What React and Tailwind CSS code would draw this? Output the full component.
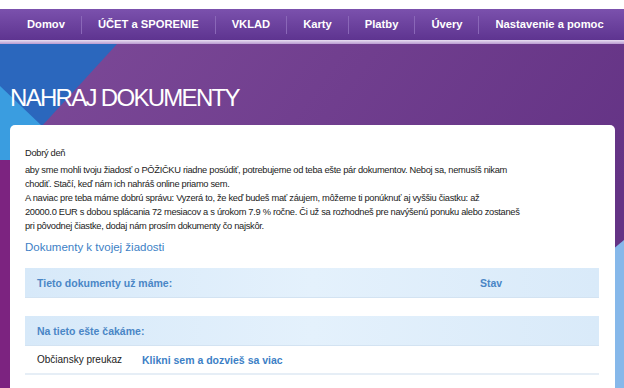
import React from 'react';

const navItems = ['Domov', 'ÚČET a SPORENIE', 'VKLAD', 'Karty', 'Platby', 'Úvery', 'Nastavenie a pomoc'];

const Background = () => (
  <svg className="absolute left-0 top-[44px] h-[344px] w-[624px]" viewBox="0 44 624 344" preserveAspectRatio="none">
    <defs>
      <linearGradient id="purp" x1="0" y1="0" x2="1" y2="0.4">
        <stop offset="0" stopColor="#7d4a98" />
        <stop offset="1" stopColor="#643385" />
      </linearGradient>
    </defs>
    <rect x="0" y="44" width="624" height="344" fill="url(#purp)" />
    <polygon points="0,44 117,44 20,150 0,150" fill="#2b67bd" />
    <polygon points="0,86 42,126 20,150 0,150" fill="#3a9de0" />
    <polygon points="0,150 20,150 0,172" fill="#3a9de0" />
    <polygon points="0,160 12,160 12,388 0,388" fill="#7c2380" />
    <polygon points="612,250 624,240 624,388 612,388" fill="#86b8ea" />
  </svg>
);

export default function App() {
  return (
    <div className="relative h-[388px] w-[624px] overflow-hidden bg-white font-['Liberation_Sans',sans-serif]">
      <Background />
      <div className="relative flex flex-col">
        {/* top menu */}
        <div className="h-[9px] bg-white" />
        <nav className="flex h-[31px] items-center whitespace-nowrap bg-gradient-to-b from-[#7b51ad] to-[#5e3490] pl-[11px]">
          {navItems.map((item, i) => (
            <div key={item} className="flex items-center">
              {i > 0 && <span className="h-[18px] w-px bg-[#8a67b8]" />}
              <span className="px-[16px] text-[11.2px] font-bold text-white">{item}</span>
            </div>
          ))}
        </nav>
        <div className="h-[4px] bg-gradient-to-b from-[#e9e0f2] to-[#b99ad0]" />

        {/* page title */}
        <h1 className="pl-[10px] pt-[39px] text-[24px] leading-[30px] tracking-[-1.7px] text-white">
          NAHRAJ DOKUMENTY
        </h1>

        {/* content card */}
        <div className="ml-[10px] mt-[12px] h-[300px] w-[605px] rounded-[5px] bg-white px-[15px] pt-[21px] text-[9.3px] leading-[14px] tracking-[-0.3px] text-[#222]">
          <p>Dobrý deň</p>
          <p className="mt-[3px] whitespace-nowrap">
            aby sme mohli tvoju žiadosť o PÔŽIČKU riadne posúdiť, potrebujeme od teba ešte pár dokumentov. Neboj sa, nemusíš nikam
            <br />
            chodiť. Stačí, keď nám ich nahráš online priamo sem.
            <br />
            A naviac pre teba máme dobrú správu: Vyzerá to, že keď budeš mať záujem, môžeme ti ponúknuť aj vyššiu čiastku: až
            <br />
            20000.0 EUR s dobou splácania 72 mesiacov a s úrokom 7.9 % ročne. Či už sa rozhodneš pre navýšenú ponuku alebo zostaneš
            <br />
            pri pôvodnej čiastke, dodaj nám prosím dokumenty čo najskôr.
          </p>
          <p className="mt-[6px] text-[11.5px] leading-[16px] tracking-normal text-[#3d7fc6]">Dokumenty k tvojej žiadosti</p>

          <div className="mt-[13px] mr-[1px] flex flex-col tracking-normal">
            <div className="flex h-[30px] items-center border-b border-[#d3e3f2] bg-gradient-to-r from-[#d7e9f9] via-[#e4f1fc] to-[#d9eaf9] pl-[12px] text-[10.5px] font-bold text-[#4a86c6]">
              <span className="w-[443px]">Tieto dokumenty už máme:</span>
              <span>Stav</span>
            </div>
            <div className="h-[18px]" />
            <div className="flex h-[30px] items-center border-b border-[#d3e3f2] bg-gradient-to-r from-[#d7e9f9] via-[#e4f1fc] to-[#d9eaf9] pl-[12px] text-[10.5px] font-bold text-[#4a86c6]">
              Na tieto ešte čakáme:
            </div>
            <div className="flex h-[29px] items-center border-b-2 border-[#e6eef6] pl-[12px]">
              <span className="w-[105px] text-[10px] text-[#222]">Občiansky preukaz</span>
              <span className="text-[10.5px] font-bold text-[#3d7fc6]">Klikni sem a dozvieš sa viac</span>
            </div>
          </div>
        </div>
      </div>
    </div>
  );
}
